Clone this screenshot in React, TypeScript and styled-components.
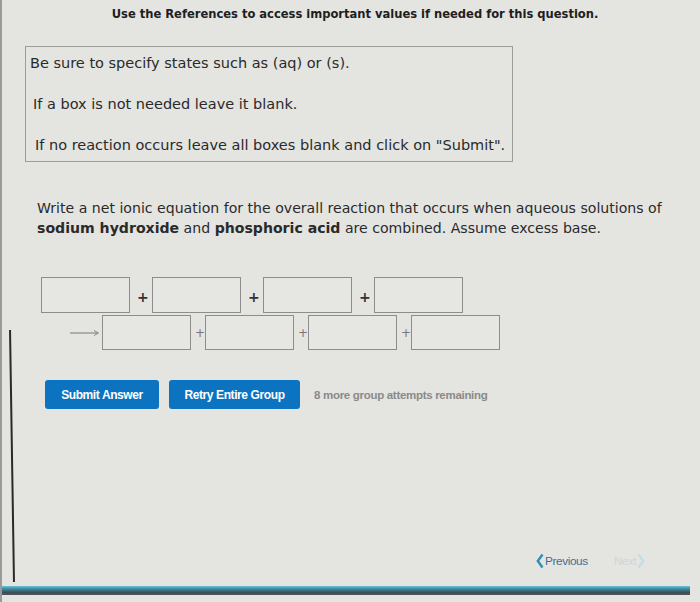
import React from "react";
import styled, { createGlobalStyle } from "styled-components";

const Global = createGlobalStyle`
  html, body { margin: 0; padding: 0; background: #e3e3e0; }
  body { width: 700px; height: 602px; overflow: hidden; }
`;

const Page = styled.div`
  position: relative;
  width: 700px;
  height: 602px;
  box-sizing: border-box;
  background: #e4e4e1;
  border-left: 2px solid #9a9a98;
  font-family: "DejaVu Sans", Verdana, sans-serif;
  color: #222;
  display: flex;
  flex-direction: column;
`;

const Header = styled.div`
  font-family: "DejaVu Sans Condensed", "DejaVu Sans", sans-serif;
  font-weight: bold;
  font-size: 12.8px;
  color: #1e1e1e;
  text-align: center;
  padding: 6px 0 0 8px;
  height: 20px;
`;

const InfoBox = styled.div`
  margin: 20px 0 0 23px;
  width: 488px;
  height: 116px;
  box-sizing: border-box;
  border: 1px solid #9c9c9c;
  padding: 5px 0 0 4px;
  display: flex;
  flex-direction: column;
  gap: 18px;
  font-size: 14.5px;
  color: #2a2a2a;
`;

const InfoLine = styled.div<{ $indent: number }>`
  padding-left: ${(p) => p.$indent}px;
  line-height: 23px;
`;

const Question = styled.div`
  margin: 36px 0 0 35px;
  width: 650px;
  font-size: 14.1px;
  line-height: 20px;
  color: #2a2a2a;
`;

const Eq = styled.div`
  margin: 39px 0 0 39px;
  display: flex;
  flex-direction: column;
  gap: 2px;
`;

const EqRow = styled.div<{ $indent: number; $gap: number }>`
  display: flex;
  align-items: center;
  gap: ${(p) => p.$gap}px;
  padding-left: ${(p) => p.$indent}px;
`;

const Box = styled.div<{ $h: number }>`
  width: 89px;
  height: ${(p) => p.$h}px;
  box-sizing: border-box;
  border: 1.5px solid #8d8d8d;
  background: #e6e6e3;
`;

const Plus = styled.span<{ $bold: boolean }>`
  font-family: "DejaVu Sans", sans-serif;
  font-size: ${(p) => (p.$bold ? 14 : 12)}px;
  font-weight: ${(p) => (p.$bold ? "bold" : "normal")};
  color: ${(p) => (p.$bold ? "#333" : "#777")};
  width: ${(p) => (p.$bold ? 8 : 6)}px;
  text-align: center;
  margin-top: ${(p) => (p.$bold ? 4 : 0)}px;
`;

const Arrow = styled.svg`
  width: 30px;
  height: 10px;
  margin-right: -2px;
`;

const Actions = styled.div`
  margin: 30px 0 0 43px;
  display: flex;
  align-items: center;
  gap: 10px;
`;

const Button = styled.div<{ $w: number }>`
  width: ${(p) => p.$w}px;
  height: 29px;
  border-radius: 3px;
  background: #0b73c0;
  color: #fff;
  font-family: "Liberation Sans", Arial, sans-serif;
  font-weight: bold;
  font-size: 12px;
  letter-spacing: -0.4px;
  display: flex;
  align-items: center;
  justify-content: center;
`;

const Remaining = styled.span`
  margin-left: 4px;
  font-family: "Liberation Sans", Arial, sans-serif;
  font-weight: bold;
  font-size: 11.5px;
  letter-spacing: -0.3px;
  color: #8a8a88;
`;

const Spacer = styled.div`
  flex: 1;
`;

const Nav = styled.div`
  display: flex;
  align-items: center;
  padding-left: 534px;
  height: 22px;
  margin-bottom: 14px;
`;

const NavLink = styled.span<{ $faded: boolean }>`
  font-family: "Liberation Sans", Arial, sans-serif;
  font-size: 11.8px;
  letter-spacing: -0.4px;
  color: ${(p) => (p.$faded ? "#cfd6da" : "#3f6f98")};
  display: flex;
  align-items: center;
  gap: 1px;
`;

const Chevron = styled.svg`
  width: 8px;
  height: 16px;
`;

const BottomBar = styled.div`
  height: 9px;
  width: 688px;
  background: linear-gradient(#6cc3d6 0%, #3f8fa4 30%, #3e4c58 70%, #4b5660 100%);
  margin-bottom: 7px;
`;

const LeftMark = styled.div`
  position: absolute;
  left: 9px;
  top: 330px;
  width: 2px;
  height: 252px;
  background: #2a2a2a;
  transform: rotate(-0.9deg);
`;

export default function App() {
  const row1 = [0, 1, 2, 3];
  const row2 = [0, 1, 2, 3];
  return (
    <>
      <Global />
      <Page>
        <LeftMark />
        <Header>Use the References to access important values if needed for this question.</Header>
        <InfoBox>
          <InfoLine $indent={0}>Be sure to specify states such as (aq) or (s).</InfoLine>
          <InfoLine $indent={3}>If a box is not needed leave it blank.</InfoLine>
          <InfoLine $indent={5}>If no reaction occurs leave all boxes blank and click on "Submit".</InfoLine>
        </InfoBox>
        <Question>
          Write a net ionic equation for the overall reaction that occurs when aqueous solutions of{" "}
          <b>sodium hydroxide</b> and <b>phosphoric acid</b> are combined. Assume excess base.
        </Question>
        <Eq>
          <EqRow $indent={0} $gap={7}>
            {row1.map((i) => (
              <React.Fragment key={i}>
                {i > 0 && <Plus $bold={true}>+</Plus>}
                <Box $h={36} />
              </React.Fragment>
            ))}
          </EqRow>
          <EqRow $indent={29} $gap={4}>
            <Arrow viewBox="0 0 30 10">
              <line x1="0" y1="5" x2="28" y2="5" stroke="#8a8a8a" strokeWidth="1.2" />
              <path d="M24 2.5 L28.5 5 L24 7.5" fill="none" stroke="#8a8a8a" strokeWidth="1" />
            </Arrow>
            {row2.map((i) => (
              <React.Fragment key={i}>
                {i > 0 && <Plus $bold={false}>+</Plus>}
                <Box $h={35} />
              </React.Fragment>
            ))}
          </EqRow>
        </Eq>
        <Actions>
          <Button $w={114}>Submit Answer</Button>
          <Button $w={131}>Retry Entire Group</Button>
          <Remaining>8 more group attempts remaining</Remaining>
        </Actions>
        <Spacer />
        <Nav>
          <NavLink $faded={false}>
            <Chevron viewBox="0 0 8 16">
              <path d="M6.5 1.5 L1.8 8 L6.5 14.5" fill="none" stroke="#2f8fb8" strokeWidth="2.4" />
            </Chevron>
            Previous
          </NavLink>
          <NavLink $faded={true} style={{ marginLeft: 26 }}>
            Next
            <Chevron viewBox="0 0 8 16">
              <path d="M1.5 1.5 L6.2 8 L1.5 14.5" fill="none" stroke="#c5dde6" strokeWidth="2.4" />
            </Chevron>
          </NavLink>
        </Nav>
        <BottomBar />
      </Page>
    </>
  );
}
